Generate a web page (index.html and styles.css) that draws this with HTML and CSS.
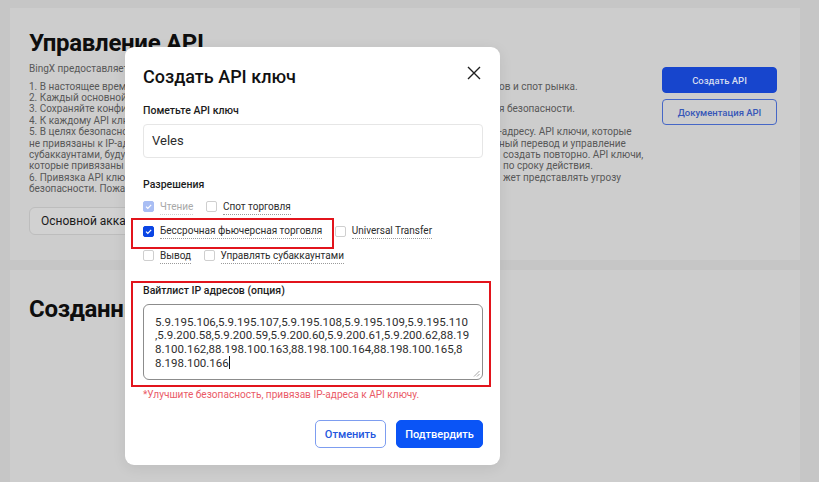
FILE: index.html
```html
<!DOCTYPE html>
<html lang="ru">
<head>
<meta charset="utf-8">
<title>Управление API</title>
<link rel="stylesheet" href="styles.css">
</head>
<body>
<div class="page">
  <section class="card card-intro">
    <div class="intro-main">
      <h1 class="page-title">Управление API</h1>
      <p class="lead">BingX предоставляет мощный API для создания торговых стратегий и автоматизации.</p>
      <div class="notes">
        <div class="line"><span class="l">1. В настоящее время API поддерживает торговлю бессрочными и стандартными фьючерс</span><span class="r">ов и спот рынка.</span></div>
        <div class="line"><span class="l">2. Каждый основной аккаунт может создать до 20 API ключей.</span></div>
        <div class="line"><span class="l">3. Сохраняйте конфиденциальность API ключа и Secret ключа дл</span><span class="r">я безопасности.</span></div>
        <div class="line"><span class="l">4. К каждому API ключу можно привязать до 20 IP-адресов.</span></div>
        <div class="line"><span class="l">5. В целях безопасности рекомендуется привязать API ключ к IP</span><span class="r">-адресу. API ключи, которые</span></div>
        <div class="line"><span class="l">не привязаны к IP-адресу и имеют разрешения на торговлю, универсаль</span><span class="r">ный перевод и управление</span></div>
        <div class="line"><span class="l">субаккаунтами, будут удалены через 90 дней бездействия, их нужно будет</span><span class="r indent">создать повторно. API ключи,</span></div>
        <div class="line"><span class="l">которые привязаны к IP-адресу, не ограничены</span><span class="r indent">по сроку действия.</span></div>
        <div class="line"><span class="l">6. Привязка API ключа к сторонним платформам мо</span><span class="r indent">жет представлять угрозу</span></div>
        <div class="line"><span class="l">безопасности. Пожалуйста, будьте внимательны.</span></div>
      </div>
      <button class="account-switch">Основной аккаунт</button>
    </div>
    <div class="intro-actions">
      <button class="btn btn-dim-primary">Создать API</button>
      <button class="btn btn-dim-outline">Документация API</button>
    </div>
  </section>
  <section class="card card-list">
    <h2 class="page-title">Созданные API</h2>
  </section>
</div>

<div class="modal">
  <div class="modal-head">
    <h3 class="modal-title">Создать API ключ</h3>
    <button class="close" aria-label="Закрыть">
      <svg width="14" height="14" viewBox="0 0 14 14"><path d="M1 1L13 13M13 1L1 13" stroke="#1f1f1f" stroke-width="1.4" fill="none"/></svg>
    </button>
  </div>

  <div class="field-label label-name">Пометьте API ключ</div>
  <div class="input">Veles</div>

  <div class="field-label label-perm">Разрешения</div>
  <div class="perms">
    <div class="perm-row">
      <label class="perm disabled"><span class="box checked"><svg width="11" height="11" viewBox="0 0 11 11"><path d="M3 5.6L4.8 7.3L8.2 3.8" stroke="#fff" stroke-width="1.2" fill="none"/></svg></span><span class="perm-text">Чтение</span></label>
      <label class="perm"><span class="box"></span><span class="perm-text">Спот торговля</span></label>
    </div>
    <div class="perm-row">
      <label class="perm"><span class="box checked"><svg width="11" height="11" viewBox="0 0 11 11"><path d="M3 5.6L4.8 7.3L8.2 3.8" stroke="#fff" stroke-width="1.2" fill="none"/></svg></span><span class="perm-text">Бессрочная фьючерсная торговля</span></label>
      <label class="perm"><span class="box"></span><span class="perm-text">Universal Transfer</span></label>
    </div>
    <div class="perm-row">
      <label class="perm"><span class="box"></span><span class="perm-text">Вывод</span></label>
      <label class="perm"><span class="box"></span><span class="perm-text">Управлять субаккаунтами</span></label>
    </div>
  </div>

  <div class="field-label label-ip">Вайтлист IP адресов (опция)</div>
  <div class="textarea">
    <div class="ta-line">5.9.195.106,5.9.195.107,5.9.195.108,5.9.195.109,5.9.195.110</div>
    <div class="ta-line">,5.9.200.58,5.9.200.59,5.9.200.60,5.9.200.61,5.9.200.62,88.19</div>
    <div class="ta-line">8.100.162,88.198.100.163,88.198.100.164,88.198.100.165,8</div>
    <div class="ta-line">8.198.100.166<span class="caret"></span></div>
    <svg class="resize" width="7" height="7" viewBox="0 0 7 7"><path d="M6.5 1L1 6.5M6.5 4L4 6.5" stroke="#9a9a9a" stroke-width="0.9" fill="none"/></svg>
  </div>
  <div class="hint">*Улучшите безопасность, привязав IP-адреса к API ключу.</div>

  <div class="modal-foot">
    <button class="btn btn-cancel">Отменить</button>
    <button class="btn btn-confirm">Подтвердить</button>
  </div>

  <div class="mark mark-futures"></div>
  <div class="mark mark-ip"></div>
</div>
</body>
</html>
```

FILE: styles.css
```css
* { box-sizing: border-box; }
html, body { margin: 0; }
body {
  width: 819px;
  height: 482px;
  overflow: hidden;
  position: relative;
  background: #c6c6c6;
  font-family: Roboto, "Noto Sans", sans-serif;
  color: #111;
}
button { font-family: inherit; cursor: pointer; }

.page {
  display: flex;
  flex-direction: column;
  gap: 10px;
  height: 482px;
  padding: 8px 19px 0 10px;
}
.card { background: #cdcdcd; }
.card-intro {
  height: 252px;
  display: grid;
  grid-template-columns: 1fr 115px;
  padding: 20px 23px 0 19px;
}
.card-list { flex: 1; padding: 24px 19px; }

.page-title {
  margin: 0;
  font-size: 24px;
  line-height: 30px;
  font-weight: 700;
  color: #0e0e0e;
  letter-spacing: -0.3px;
}
.lead {
  margin: 5px 0 0;
  font-size: 10px;
  line-height: 11.5px;
  color: #585858;
}
.notes {
  margin-top: 6px;
  font-size: 10px;
  line-height: 11.4px;
  color: #585858;
}
.line { display: flex; white-space: nowrap; }
.line .l { flex: 0 0 470px; overflow: hidden; }
.line .indent { padding-left: 4px; }

.account-switch {
  margin-top: 12px;
  height: 28px;
  width: 160px;
  padding: 0 11px;
  text-align: left;
  border: 1px solid #bdbdbd;
  border-radius: 6px;
  background: #d1d1d1;
  font-size: 12px;
  color: #1a1a1a;
}

.intro-actions {
  display: flex;
  flex-direction: column;
  gap: 6px;
  margin-top: 39px;
}
.btn {
  height: 26px;
  border-radius: 4px;
  font-size: 9.5px;
  font-weight: 500;
  padding: 0;
}
.btn-dim-primary { background: #1745cd; border: 1px solid #1745cd; color: #d5dcf0; }
.btn-dim-outline { background: #cdcdcd; border: 1.5px solid #4667c6; color: #3757b8; }

/* modal */
.modal {
  position: absolute;
  left: 125px;
  top: 47px;
  width: 375px;
  height: 418px;
  background: #fff;
  border-radius: 9px;
  padding: 18px 17px 17px 18px;
  display: flex;
  flex-direction: column;
  box-shadow: 0 3px 14px rgba(0, 0, 0, 0.08);
}
.modal-head {
  display: flex;
  justify-content: space-between;
  align-items: flex-start;
}
.modal-title {
  margin: 0;
  font-size: 18px;
  line-height: 24px;
  font-weight: 500;
  color: #111;
}
.close {
  border: 0;
  background: none;
  padding: 0;
  margin: 1px 2px 0 0;
  width: 14px;
  height: 14px;
  display: flex;
}
.field-label {
  font-size: 10.5px;
  line-height: 14px;
  font-weight: 500;
  color: #1c1c1c;
}
.label-name { margin-top: 15px; }
.input {
  margin-top: 6px;
  height: 34px;
  border: 1px solid #e6e6e6;
  border-radius: 4px;
  padding: 0 8px;
  display: flex;
  align-items: center;
  font-size: 13px;
  color: #2b2b2b;
}
.label-perm { margin-top: 20px; }
.perms {
  margin-top: 9px;
  display: flex;
  flex-direction: column;
  gap: 10.5px;
}
.perm-row { display: flex; gap: 12.5px; }
.perm { display: flex; align-items: flex-start; gap: 6px; }
.box {
  width: 11px;
  height: 11px;
  margin-top: 0.5px;
  border: 1px solid #cfcfcf;
  border-radius: 2px;
  background: #fff;
  display: flex;
}
.box.checked { background: #0a45e4; border-color: #0a45e4; }
.box svg { margin: -1px; }
.perm.disabled .box.checked { background: #a9bef4; border-color: #a9bef4; }
.perm-text {
  font-size: 10px;
  line-height: 12px;
  color: #2c2c2c;
  padding-bottom: 1px;
  border-bottom: 1px dotted #9a9a9a;
}
.perm.disabled .perm-text { color: #a8a8a8; border-bottom-color: #cfcfcf; }

.label-ip { margin-top: 20px; }
.textarea {
  position: relative;
  margin-top: 6px;
  height: 77px;
  border: 1px solid #8c8c8c;
  border-radius: 6px;
  padding: 11px 11px 0;
  font-size: 11.5px;
  line-height: 13.6px;
  color: #2e2e2e;
  white-space: nowrap;
}
.caret {
  display: inline-block;
  width: 1px;
  height: 13px;
  background: #111;
  vertical-align: -2px;
}
.resize { position: absolute; right: 2px; bottom: 2px; }
.hint {
  margin-top: 8px;
  font-size: 10.1px;
  line-height: 14px;
  color: #ea5b68;
}
.modal-foot {
  margin-top: 18px;
  display: flex;
  justify-content: flex-end;
  gap: 10px;
}
.btn-cancel {
  height: 28px;
  width: 71px;
  background: #fff;
  border: 1px solid #7d9df0;
  color: #2457de;
  border-radius: 5px;
  font-size: 11px;
}
.btn-confirm {
  height: 28px;
  width: 87px;
  background: #0a54f6;
  border: 1px solid #0a54f6;
  color: #fff;
  border-radius: 5px;
  font-size: 11px;
}

/* red annotation frames */
.mark {
  position: absolute;
  border: 2.5px solid #e2141c;
  pointer-events: none;
}
.mark-futures { left: 6px; top: 171px; width: 203px; height: 31px; }
.mark-ip { left: 6px; top: 234px; width: 360px; height: 106px; }
```
